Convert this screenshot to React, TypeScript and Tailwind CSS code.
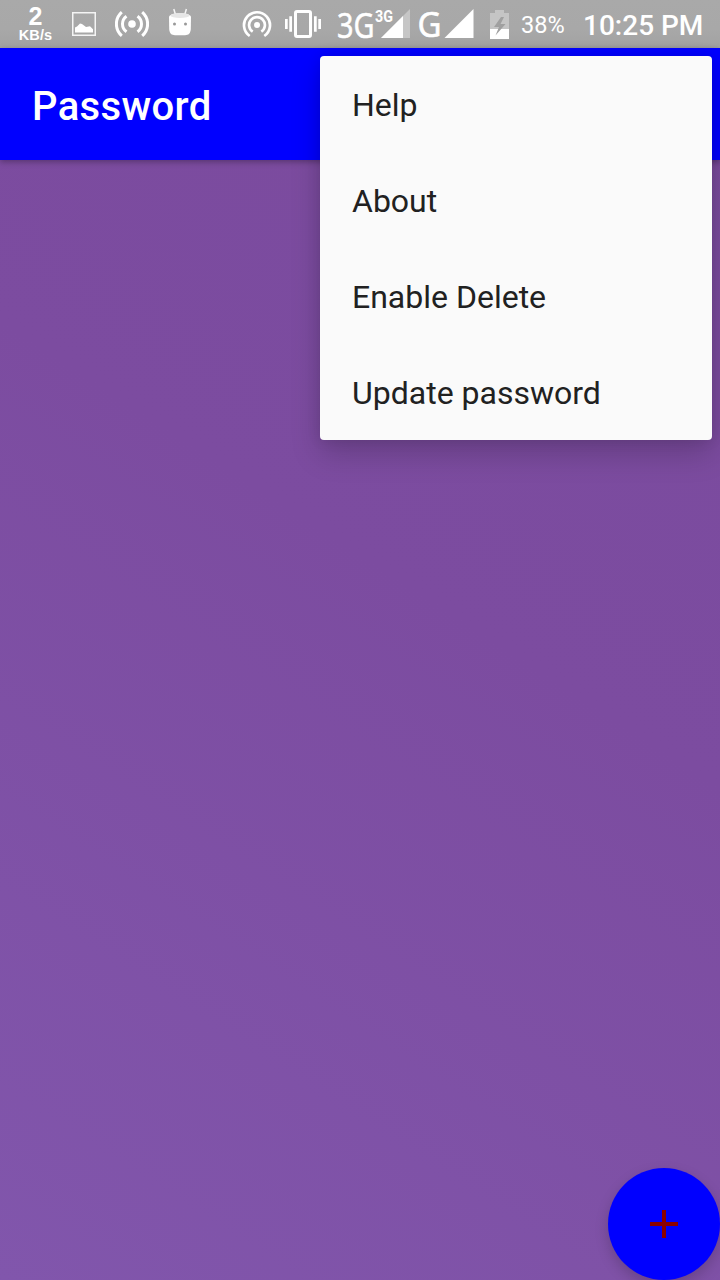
import React from "react";

const menuItems = ["Help", "About", "Enable Delete", "Update password"];

function NetworkSpeed() {
  return (
    <div className="ml-[18px] flex h-12 w-[35px] flex-col items-center font-['Liberation_Sans',sans-serif] font-bold">
      <span className="mt-[5px] h-[23px] text-[25px] leading-[23px]">2</span>
      <span className="text-[14.5px] leading-[14px] tracking-[0.1px]">KB/s</span>
    </div>
  );
}

function PictureIcon() {
  return (
    <svg className="ml-[19px] shrink-0" width="24" height="24" viewBox="0 0 24 24">
      <rect x="0.75" y="0.75" width="22.5" height="22.5" fill="none" stroke="#f4f4f4" strokeWidth="1.5" />
      <path d="M3 20.500v-5l2-1 3-3 2 .5 4 3 4-.8 3 3v3.300z" fill="#fff" />
    </svg>
  );
}

function BroadcastIcon() {
  return (
    <svg className="ml-[19px] shrink-0" width="34" height="26" viewBox="0 0 34 26" fill="none" stroke="#fff" strokeWidth="3">
      <circle cx="17" cy="13" r="3.8" fill="#fff" stroke="none" />
      <path d="M11.500 5.200a9.600 9.600 0 0 0 0 15.600M22.500 5.200a9.600 9.600 0 0 1 0 15.600M6.800 1.200a15.600 15.600 0 0 0 0 23.600M27.200 1.200a15.600 15.600 0 0 1 0 23.600" />
    </svg>
  );
}

function RobotIcon() {
  return (
    <svg className="ml-[19px] shrink-0" width="24" height="28" viewBox="0 0 24 28">
      <path d="M5.800 1l1.500 5M18.400 1l-1.500 5" stroke="#f4f4f4" strokeWidth="1.5" />
      <path d="M1 8.500C3 4 21 4 23 8.500L22.800 21C22.500 25.500 20.500 27.200 17 27.200H7C3.500 27.200 1.500 25.500 1.200 21z" fill="#fff" />
      <ellipse cx="12" cy="7.500" rx="9.500" ry="2.500" fill="#e6e6e6" />
      <circle cx="6.500" cy="16" r="1.500" fill="#999" />
      <circle cx="17.500" cy="16" r="1.500" fill="#999" />
    </svg>
  );
}

function HotspotIcon() {
  return (
    <svg className="shrink-0" width="30" height="28" viewBox="0 0 30 28" fill="none" stroke="#fff" strokeWidth="2.700">
      <circle cx="15" cy="15" r="3" fill="#fff" stroke="none" />
      <path d="M10.700 21.600a7.900 7.900 0 1 1 8.600 0M7.700 26a13 13 0 1 1 14.600 0" />
    </svg>
  );
}

function VibrateIcon() {
  return (
    <svg className="ml-[13px] shrink-0" width="36" height="28" viewBox="0 0 36 28">
      <rect x="10.500" y="1.500" width="15" height="25" rx="1.500" fill="none" stroke="#fff" strokeWidth="3" />
      <path d="M0 9h2.700v10H0zM4.300 6.300H7v15.400H4.300zM29 6.300h2.700v15.400H29zM33.300 9H36v10h-2.700z" fill="#fff" />
    </svg>
  );
}

function SignalThreeG() {
  return (
    <svg className="ml-[15px] shrink-0" width="75" height="48" viewBox="0 0 75 48">
      <text x="0" y="37.500" fill="#fff" stroke="#fff" strokeWidth="0.5" fontFamily="Noto Sans, sans-serif" fontSize="35" textLength="37.500" lengthAdjust="spacingAndGlyphs">3G</text>
      <path d="M73 9v29H44z" fill="#c6c6c6" />
      <path d="M66 16v22H44z" fill="#fff" />
      <text x="38" y="22" fill="#fff" fontFamily="Roboto, sans-serif" fontWeight="700" fontSize="17" textLength="18" lengthAdjust="spacingAndGlyphs">3G</text>
    </svg>
  );
}

function SignalG() {
  return (
    <svg className="ml-[5px] shrink-0" width="58" height="48" viewBox="0 0 58 48">
      <text x="0.500" y="37" fill="#fff" stroke="#fff" strokeWidth="0.6" fontFamily="Noto Sans, sans-serif" fontSize="35" textLength="24" lengthAdjust="spacingAndGlyphs">G</text>
      <path d="M56.500 9v29H27.500z" fill="#fff" />
    </svg>
  );
}

function BatteryIcon() {
  return (
    <svg className="ml-[15px] shrink-0" width="19" height="29" viewBox="0 0 19 29">
      <path d="M0 3h5V0h9v3h5v26H0z" fill="#c5c5c5" />
      <path d="M0 19h19v10H0z" fill="#fff" />
      <path d="M11 7L4 17h5L5.500 25.500l10-11.500h-5L14 7z" fill="#a0a0a0" />
    </svg>
  );
}

function StatusBar() {
  return (
    <header className="flex h-12 w-full items-center bg-[linear-gradient(180deg,#a9a9a9_0%,#a8a8a8_60%,#a2a2a2_100%)] text-white">
      <NetworkSpeed />
      <PictureIcon />
      <BroadcastIcon />
      <div className="-mt-[5px]">
        <RobotIcon />
      </div>
      <div className="ml-[50px] flex items-center">
        <HotspotIcon />
        <VibrateIcon />
        <div className="ml-px flex items-center">
          <SignalThreeG />
          <SignalG />
          <BatteryIcon />
        </div>
        <span className="ml-[12px] w-[44px] pt-[2px] text-[23.500px] leading-[28px] whitespace-nowrap">38%</span>
        <span className="ml-[18px] pt-[4px] text-[28px] leading-[32px] font-medium whitespace-nowrap">10:25 PM</span>
      </div>
    </header>
  );
}

function OverflowMenu() {
  return (
    <ul className="absolute top-[56px] right-2 h-96 w-[392px] rounded-[4px] bg-[#fafafa] text-[#212121] shadow-[0_14px_30px_rgba(0,0,0,0.18),0_0_14px_rgba(0,0,0,0.1)]">
      {menuItems.map((item) => (
        <li key={item} className="flex h-24 items-center px-8 pt-[2px] text-[32px] leading-[38px]">
          {item}
        </li>
      ))}
    </ul>
  );
}

export default function App() {
  return (
    <div className="relative flex h-[1280px] w-[720px] flex-col overflow-hidden bg-[linear-gradient(213deg,#7a4a9d_0%,#7c4ca0_45%,#8156ac_100%)] font-['Roboto',sans-serif]">
      <StatusBar />
      <div className="flex h-28 items-center bg-[#0000ff] px-8 pt-[6px] text-[40px] font-medium tracking-[0.35px] text-white shadow-[0_2px_6px_rgba(0,0,0,0.3)]">
        <h1>Password</h1>
      </div>
      <main className="flex flex-1 items-end justify-end">
        <button
          aria-label="Add"
          className="flex size-28 items-center justify-center rounded-full bg-[#0000ff] shadow-[0_6px_14px_rgba(0,0,0,0.18)]"
        >
          <svg width="28" height="28" viewBox="0 0 28 28" fill="#8b0000">
            <path d="M12 0h4v12h12v4H16v12h-4V16H0v-4h12z" />
          </svg>
        </button>
      </main>
      <OverflowMenu />
    </div>
  );
}
